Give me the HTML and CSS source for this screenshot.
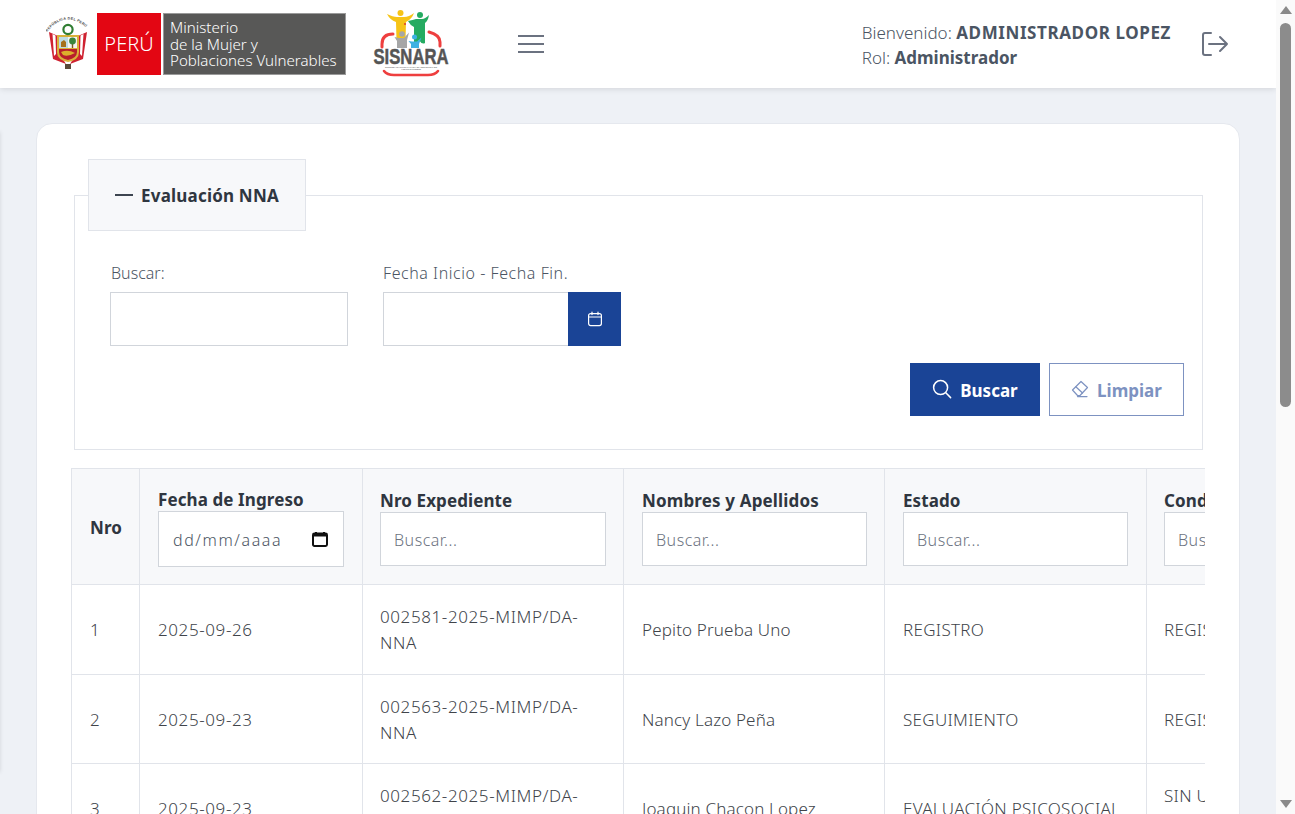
FILE: index.html
```html
<!DOCTYPE html>
<html lang="es">
<head>
    <meta charset="UTF-8">
    <meta name="viewport" content="width=device-width, initial-scale=1.0">
    <title>SISNARA - Evaluación NNA</title>
    <link rel="stylesheet" href="styles.css">
</head>
<body>
    <div class="page">
        <div class="sidebar-edge"></div>
        <header class="topbar">
            <div class="brand">
                <svg class="escudo" viewBox="0 0 44 54" width="44" height="54">
                    <defs><path id="arco" d="M1 15 Q20 -9 43 13"/></defs>
                    <text class="escudo-text"><textPath href="#arco">REPÚBLICA DEL PERÚ</textPath></text>
                    <path d="M3 15 L12 19 L13 36 L20 47 L7 42 Z" fill="#cf2231"/>
                    <path d="M41 15 L32 19 L31 36 L24 47 L37 42 Z" fill="#cf2231"/>
                    <path d="M6.5 17 L9.5 18.5 L10 37 L8 39 Z" fill="#fff"/>
                    <path d="M37.5 17 L34.5 18.5 L34 37 L36 39 Z" fill="#fff"/>
                    <path d="M11 18 H33 V35 Q33 43 22 45 Q11 43 11 35 Z" fill="#d9b13a"/>
                    <path d="M13 20 H22 V31 H13 Z" fill="#bcdbe4"/>
                    <path d="M22 20 H31 V31 H22 Z" fill="#f4f4f0"/>
                    <path d="M15 30 V25 L18 23 L20 25 V30 Z" fill="#a5701c"/>
                    <path d="M26.5 24 V31" stroke="#7a5a20" stroke-width="1.4"/>
                    <circle cx="26.5" cy="24" r="3.4" fill="#39863d"/>
                    <path d="M13 32 H31 V35 Q31 41 22 43 Q13 41 13 35 Z" fill="#b81f2b"/>
                    <path d="M15 35 Q22 32 29 36 Q22 40 17 38 Z" fill="#dcb12c"/>
                    <circle cx="22" cy="12.5" r="4.6" fill="none" stroke="#2f7d32" stroke-width="2.2"/>
                    <path d="M19 47 H25 V52 H19 Z" fill="#5a4a3a"/>
                </svg>
                <div class="peru">PERÚ</div>
                <div class="ministerio">Ministerio<br>de la Mujer y<br>Poblaciones Vulnerables</div>
                <svg class="sisnara" viewBox="0 0 78 68" width="78" height="68">
                    <path d="M21 24 Q10 24 10 34 V37" fill="none" stroke="#ee3f3f" stroke-width="3" stroke-linecap="round"/>
                    <path d="M57 22 Q68 25 68 32 V36" fill="none" stroke="#ee3f3f" stroke-width="3" stroke-linecap="round"/>
                    <path d="M12 61 Q15 65 22 65 H56 Q63 65 66 61" fill="none" stroke="#ee3f3f" stroke-width="2.6" stroke-linecap="round"/>
                    <circle cx="28.5" cy="3" r="3" fill="#f6c416"/>
                    <path d="M15 4 Q21 7 25 7 H32 Q37 7 42 3 Q40 9 34 12 L33.5 30 H24.5 L24 12 Q18 10 15 4 Z" fill="#f6c416"/>
                    <circle cx="48" cy="5" r="3" fill="#25ab61"/>
                    <path d="M36 11 Q41 10 44 9 H50 Q53 9 57 5 Q56 11 53 13 L53 33 Q50 35 47 30 L45 34 H42 L42 17 Q38 15 36 11 Z" fill="#25ab61"/>
                    <circle cx="30" cy="24" r="2.8" fill="#a6a6a6"/>
                    <path d="M22.5 27 L27 28 H32 L37 22.5 L35 30 V38 H25 V31 Z" fill="#a6a6a6"/>
                    <circle cx="42.5" cy="27" r="2.5" fill="#3eb1e3"/>
                    <path d="M36.5 31 L40 31.5 H45 L49.5 27.5 L47 34 V38 H39 V34 Z" fill="#3eb1e3"/>
                    <path d="M32 14 H34 M33 13 V15" stroke="#d8262c" stroke-width=".8"/>
                    <text class="sisnara-text" x="39" y="54" text-anchor="middle" textLength="75" lengthAdjust="spacingAndGlyphs">SISNARA</text>
                    <text class="sisnara-small" x="39" y="57.6" text-anchor="middle" textLength="52" lengthAdjust="spacingAndGlyphs">SISTEMA NACIONAL PARA EL REGISTRO DE</text>
                    <text class="sisnara-small" x="39" y="60" text-anchor="middle" textLength="20" lengthAdjust="spacingAndGlyphs">ADOPCIONES</text>
                </svg>
            </div>
            <button class="menu-btn" type="button" aria-label="Menú"><span></span><span></span><span></span></button>
            <div class="user-box">
                <div class="user-info">
                    <div>Bienvenido: <b class="user-name">ADMINISTRADOR LOPEZ</b></div>
                    <div>Rol: <b>Administrador</b></div>
                </div>
                <svg class="logout" viewBox="0 0 28 28" width="28" height="28" fill="none" stroke="#6b7280" stroke-width="2" stroke-linecap="round" stroke-linejoin="round">
                    <path d="M10 3 H4 Q2 3 2 5 V23 Q2 25 4 25 H10"/>
                    <path d="M8 14 H26 M19 7 L26 14 L19 21"/>
                </svg>
            </div>
        </header>

        <main class="content">
            <section class="card">
                <fieldset class="filtros">
                    <legend><span class="minus"></span>Evaluación NNA</legend>
                    <div class="filtros-row">
                        <div class="campo campo-buscar">
                            <label>Buscar:</label>
                            <input type="text" class="form-input">
                        </div>
                        <div class="campo campo-fecha">
                            <label>Fecha Inicio - Fecha Fin.</label>
                            <div class="input-group">
                                <input type="text" class="form-input">
                                <span class="input-addon">
                                    <svg viewBox="0 0 16 16" width="16" height="16" fill="none" stroke="#fff" stroke-width="1.2" stroke-linecap="round">
                                        <rect x="1.6" y="2.6" width="12.8" height="12" rx="2"/>
                                        <path d="M1.6 6 H14.4 M5 1 V3.6 M11 1 V3.6"/>
                                    </svg>
                                </span>
                            </div>
                        </div>
                    </div>
                    <div class="acciones">
                        <button type="button" class="btn btn-primary">
                            <svg viewBox="0 0 20 20" width="20" height="20" fill="none" stroke="#fff" stroke-width="1.5" stroke-linecap="round">
                                <circle cx="8.6" cy="8.6" r="7"/>
                                <path d="M13.8 13.8 L18.6 18.6"/>
                            </svg>
                            Buscar
                        </button>
                        <button type="button" class="btn btn-outline">
                            <svg viewBox="0 0 18 18" width="18" height="18" fill="none" stroke="#7d92c1" stroke-width="1.2" stroke-linejoin="round" stroke-linecap="round">
                                <path d="M1.5 10 L10 1.5 L16.5 7.5 L9 15.5 H6.5 Z"/>
                                <path d="M4.8 6.8 L11.5 13"/>
                                <path d="M6.5 16.6 H16"/>
                            </svg>
                            Limpiar
                        </button>
                    </div>
                </fieldset>

                <div class="table-wrap">
                    <table class="tabla">
                        <colgroup>
                            <col class="c-nro"><col class="c-fecha"><col class="c-exp"><col class="c-nom"><col class="c-est"><col class="c-cond">
                        </colgroup>
                        <thead>
                            <tr>
                                <th class="cell-nro">Nro</th>
                                <th>Fecha de Ingreso<div class="fake-date">dd/mm/aaaa<svg viewBox="0 0 16 16" width="16" height="16"><path d="M4 1 V3 M12 1 V3" stroke="#111" stroke-width="2"/><rect x="1" y="2.5" width="14" height="12.5" rx="1.4" fill="none" stroke="#111" stroke-width="2"/><path d="M1 4 H15" stroke="#111" stroke-width="3"/></svg></div></th>
                                <th class="cell-exp">Nro Expediente<input type="text" class="form-input" placeholder="Buscar..."></th>
                                <th class="cell-nom">Nombres y Apellidos<input type="text" class="form-input" placeholder="Buscar..."></th>
                                <th>Estado<input type="text" class="form-input" placeholder="Buscar..."></th>
                                <th class="cell-cond">Condición<input type="text" class="form-input" placeholder="Buscar..."></th>
                            </tr>
                        </thead>
                        <tbody>
                            <tr>
                                <td>1</td><td class="num">2025-09-26</td><td class="num cell-exp">002581-2025-MIMP/DA-NNA</td><td class="cell-nom">Pepito Prueba Uno</td><td class="cell-est">REGISTRO</td><td class="cell-est cell-cond">REGISTRO</td>
                            </tr>
                            <tr>
                                <td>2</td><td class="num">2025-09-23</td><td class="num cell-exp">002563-2025-MIMP/DA-NNA</td><td class="cell-nom">Nancy Lazo Peña</td><td class="cell-est">SEGUIMIENTO</td><td class="cell-est cell-cond">REGISTRO</td>
                            </tr>
                            <tr>
                                <td>3</td><td class="num">2025-09-23</td><td class="num cell-exp">002562-2025-MIMP/DA-NNA</td><td class="cell-nom">Joaquin Chacon Lopez</td><td class="cell-est">EVALUACIÓN PSICOSOCIAL</td><td class="cell-est cell-cond">SIN UBICACIÓN DE LA FAMILIA</td>
                            </tr>
                        </tbody>
                    </table>
                </div>
            </section>
        </main>
    </div>

    <div class="scrollbar">
        <span class="arrow arrow-up"></span>
        <div class="thumb-track"><div class="thumb"></div></div>
        <span class="arrow arrow-down"></span>
    </div>
</body>
</html>
```

FILE: styles.css
```css
html, body {
    height: 100%;
    margin: 0;
    overflow: hidden;
}
body {
    display: flex;
    font-family: "Noto Sans", sans-serif;
    font-weight: 300;
    font-size: 16px;
    color: #374151;
    background-color: #eef1f6;
}
* {
    box-sizing: border-box;
}
.page {
    position: relative;
    flex: 1;
    min-width: 0;
    height: 814px;
    overflow: hidden;
}
/* menu lateral escondido, solo se ve su sombra */
.sidebar-edge {
    position: absolute;
    left: -10px;
    top: 132px;
    width: 10px;
    height: 640px;
    box-shadow: 0 0 4px rgba(0, 0, 0, 0.12);
}

/* barra superior */
.topbar {
    position: relative;
    display: flex;
    align-items: center;
    height: 88px;
    padding: 0 47px 0 46px;
    background-color: #fff;
    box-shadow: 0 1px 6px rgba(0, 0, 0, 0.12);
}
.brand {
    display: flex;
    align-items: center;
}
.escudo {
    margin-right: 7px;
}
.escudo-text {
    font-family: "Liberation Sans", sans-serif;
    font-size: 3.6px;
    font-weight: 700;
    letter-spacing: 0.3px;
    fill: #444;
}
.peru {
    width: 64px;
    height: 62px;
    background-color: #e30613;
    color: #fff;
    font-size: 20px;
    font-weight: 300;
    line-height: 62px;
    text-align: center;
}
.ministerio {
    width: 183px;
    height: 62px;
    margin-left: 2px;
    padding: 5px 0 0 6px;
    background-color: #585857;
    border: 1px solid #9a9a9a;
    color: #fff;
    font-size: 15.1px;
    font-weight: 300;
    line-height: 16.5px;
    white-space: nowrap;
}
.sisnara {
    margin-left: 26px;
}
.sisnara-text {
    font-family: "Liberation Sans", sans-serif;
    font-size: 21.6px;
    font-weight: 700;
    fill: #555;
    stroke: #555;
    stroke-width: 0.5;
}
.sisnara-small {
    font-family: "Liberation Sans", sans-serif;
    font-size: 2.2px;
    font-weight: 700;
    fill: #777;
}
.menu-btn {
    display: flex;
    flex-direction: column;
    gap: 6px;
    width: 26px;
    margin: 0 0 1px 68px;
    padding: 0;
    border: none;
    background: none;
}
.menu-btn span {
    height: 2px;
    background-color: #6b7280;
}
.user-box {
    display: flex;
    align-items: center;
    margin-left: auto;
}
.user-info {
    padding-top: 2px;
    font-size: 17px;
    line-height: 25px;
    color: #4b5563;
}
.user-info b {
    font-weight: 700;
}
.user-name {
    letter-spacing: 0.6px;
}
.logout {
    margin-left: 30px;
}

/* contenido */
.content {
    padding: 35px 36px 0;
}
.card {
    padding: 35px 34px 0;
    background-color: #fff;
    border: 1px solid #e5e8ee;
    border-radius: 16px;
}
.filtros {
    margin: 0 2px 18px 3px;
    padding: 0 18px 33px 13px;
    border: 1px solid #e1e4ea;
    min-width: 0;
}
legend {
    display: flex;
    align-items: center;
    height: 72px;
    margin-bottom: -4px;
    padding: 0 26px;
    background-color: #f7f8fa;
    border: 1px solid #e1e4ea;
    font-size: 17px;
    font-weight: 700;
    letter-spacing: 0.2px;
    color: #2f3640;
}
.minus {
    width: 18px;
    height: 2px;
    margin-right: 8px;
    background-color: #3d4550;
}
.filtros-row {
    display: flex;
    gap: 35px;
    padding: 34px 0 0 22px;
}
.campo label {
    display: block;
    margin-bottom: 7px;
    line-height: 24px;
    letter-spacing: 0.55px;
    color: #4b5563;
}
.campo-buscar label {
    padding-left: 1px;
    letter-spacing: 0;
}
.campo-buscar {
    width: 238px;
}
.campo-fecha {
    width: 238px;
}
.form-input {
    display: block;
    width: 100%;
    height: 54px;
    padding: 2px 13px 0;
    background-color: #fff;
    border: 1px solid #d1d5db;
    border-radius: 0;
    font-family: inherit;
    font-size: 16px;
    font-weight: 300;
    letter-spacing: 0.5px;
    color: #374151;
}
.form-input::placeholder {
    color: #6b7280;
    opacity: 1;
}
.input-group {
    display: flex;
}
.input-group .form-input {
    flex: 1;
    min-width: 0;
    border-right: none;
}
.input-addon {
    display: flex;
    align-items: center;
    justify-content: center;
    width: 53px;
    background-color: #1a4496;
}
.acciones {
    display: flex;
    justify-content: flex-end;
    gap: 9px;
    margin-top: 17px;
}
.btn {
    display: flex;
    align-items: center;
    justify-content: center;
    gap: 8px;
    height: 53px;
    padding-top: 2px;
    font-family: inherit;
    font-size: 17px;
    font-weight: 700;
}
.btn svg {
    margin-top: -2px;
}
.btn-primary {
    width: 130px;
    background-color: #1a4496;
    border: 1px solid #1a4496;
    color: #fff;
}
.btn-outline {
    width: 135px;
    background-color: #fff;
    border: 1px solid #7d92c1;
    color: #7d92c1;
}

/* tabla */
.table-wrap {
    width: 1134px;
    overflow: hidden;
}
.tabla {
    table-layout: fixed;
    width: 1320px;
    border-collapse: collapse;
    color: #40444a;
}
.c-nro { width: 68px; }
.c-fecha { width: 223px; }
.c-exp { width: 261px; }
.c-nom { width: 261px; }
.c-est { width: 262px; }
.c-cond { width: 245px; }
.tabla th, .tabla td {
    border: 1px solid #e1e4ea;
    padding: 0 18px;
    font-size: 17px;
    text-align: left;
    vertical-align: middle;
    line-height: 26px;
}
.tabla th {
    height: 116px;
    padding-top: 1px;
    background-color: #f7f8fa;
    font-weight: 700;
    letter-spacing: 0.1px;
    line-height: 24px;
    color: #2f3640;
}
.tabla th .form-input, .tabla th .fake-date {
    margin-top: -1px;
}
.tabla .cell-nro {
    padding-top: 2px;
}
.tabla td {
    height: 89.5px;
    padding-top: 2px;
}
.tabla .cell-exp {
    padding-left: 17px;
    padding-right: 17px;
}
.tabla .cell-nom {
    padding-right: 17px;
    letter-spacing: 0.15px;
}
.tabla .cell-cond {
    padding-left: 17px;
}
.tabla .num {
    letter-spacing: 0.6px;
}
.tabla .cell-est {
    letter-spacing: 0.3px;
}
.fake-date {
    display: flex;
    align-items: center;
    justify-content: space-between;
    height: 56px;
    padding: 2px 15px 0 14px;
    background-color: #fff;
    border: 1px solid #d1d5db;
    font-size: 16px;
    font-weight: 300;
    letter-spacing: 1.6px;
    color: #4b5563;
}
.fake-date svg {
    margin-top: -2px;
}

/* scroll */
.scrollbar {
    display: flex;
    flex-direction: column;
    align-items: center;
    width: 19px;
    height: 814px;
    background-color: #fafafa;
}
.arrow {
    flex: none;
    width: 0;
    height: 0;
    border-left: 6px solid transparent;
    border-right: 6px solid transparent;
}
.arrow-up {
    margin-top: 6px;
    border-bottom: 8px solid #8a8a8a;
}
.arrow-down {
    margin-bottom: 6px;
    border-top: 8px solid #8a8a8a;
}
.thumb-track {
    flex: 1;
    width: 100%;
    padding: 9px 4px 0;
}
.thumb {
    height: 384px;
    background-color: #8c8c8c;
    border-radius: 6px;
}
```
